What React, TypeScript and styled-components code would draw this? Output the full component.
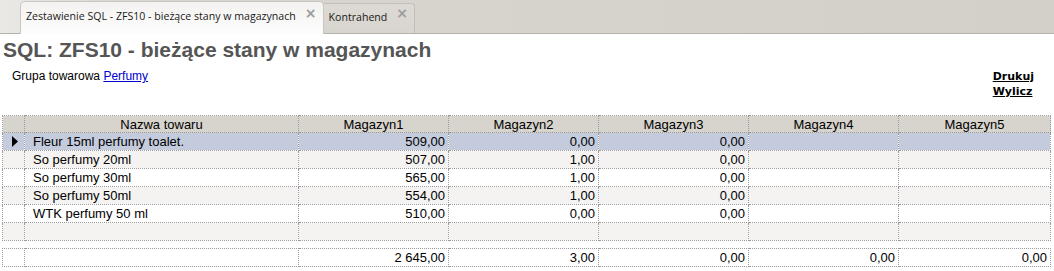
import styled, { createGlobalStyle } from "styled-components";

const GlobalStyle = createGlobalStyle`
  body {
    margin: 0;
    background: #ffffff;
    font-family: "Liberation Sans", Arial, sans-serif;
  }
`;

interface IRow {
  name: string;
  values: string[];
}

const rows: IRow[] = [
  { name: "Fleur 15ml perfumy toalet.", values: ["509,00", "0,00", "0,00", "", ""] },
  { name: "So perfumy 20ml", values: ["507,00", "1,00", "0,00", "", ""] },
  { name: "So perfumy 30ml", values: ["565,00", "1,00", "0,00", "", ""] },
  { name: "So perfumy 50ml", values: ["554,00", "1,00", "0,00", "", ""] },
  { name: "WTK perfumy 50 ml", values: ["510,00", "0,00", "0,00", "", ""] },
  { name: "", values: ["", "", "", "", ""] },
];

const totals = ["2 645,00", "3,00", "0,00", "0,00", "0,00"];
const columns = ["Magazyn1", "Magazyn2", "Magazyn3", "Magazyn4", "Magazyn5"];

const Page = styled.div`
  width: 1054px;
  height: 271px;
  overflow: hidden;
`;

const TabBar = styled.div`
  height: 34px;
  box-sizing: border-box;
  display: flex;
  align-items: flex-end;
  padding-left: 20px;
  background: linear-gradient(to right, #ebe9e6 0px, #d9d6d0 120px, #d3d0ca 100%);
  border-bottom: 1px solid #b4b2aa;
`;

const Tab = styled.div<{ active?: boolean }>`
  display: flex;
  align-items: center;
  gap: 9px;
  box-sizing: border-box;
  height: ${(props): string => (props.active ? "33px" : "30px")};
  margin-bottom: ${(props): string => (props.active ? "-1px" : "0")};
  padding: 0 6px 4px 5px;
  font-family: "Open Sans", "DejaVu Sans", sans-serif;
  font-size: 10.6px;
  color: #1a1a1a;
  background: ${(props): string =>
    props.active ? "linear-gradient(#f3f2f0, #fdfdfd)" : "linear-gradient(#dddad5, #d8d5cf)"};
  border: 1px solid ${(props): string => (props.active ? "#c9c7c2" : "#c2bfb9")};
  border-bottom: none;
  border-radius: ${(props): string => (props.active ? "5px 5px 0 0" : "0 4px 0 0")};
  border-left: ${(props): string => (props.active ? "1px solid #c9c7c2" : "none")};
`;

const Close = styled.span`
  color: #9c9c9c;
  font-family: "DejaVu Sans", sans-serif;
  font-weight: bold;
  font-size: 14px;
  margin-top: -7px;
`;

const Title = styled.h1`
  margin: 0;
  padding: 4px 0 0 3px;
  height: 26px;
  font-size: 21px;
  font-weight: bold;
  color: #555555;
  line-height: 24px;
`;

const Toolbar = styled.div`
  display: flex;
  justify-content: space-between;
  align-items: flex-start;
  padding: 5px 20px 0 12px;
  height: 51px;
  box-sizing: border-box;
  font-size: 12px;
`;

const Group = styled.div`
  color: #000000;
  a {
    color: #0000cc;
    text-decoration: underline;
  }
`;

const Actions = styled.div`
  display: flex;
  flex-direction: column;
  gap: 2px;
  font-family: "DejaVu Sans", sans-serif;
  font-size: 11px;
  font-weight: bold;
  padding-top: 1px;
  a {
    color: #000000;
    text-decoration: underline;
  }
`;

const Grid = styled.table`
  margin-left: 2px;
  width: 1048px;
  border-collapse: collapse;
  table-layout: fixed;
  font-size: 13px;
  color: #000000;
`;

const HeadCell = styled.th`
  height: 16px;
  padding: 0;
  font-weight: normal;
  text-align: center;
  background: #d7d4ce;
  border: 1px dotted #9a9a9a;
  line-height: 15px;
`;

const BodyRow = styled.tr<{ variant: "selected" | "odd" | "even" }>`
  background: ${(props): string =>
    props.variant === "selected" ? "#c4cbdc" : props.variant === "odd" ? "#f4f3f1" : "#ffffff"};
`;

const Cell = styled.td<{ align?: "left" | "right" }>`
  height: 17px;
  padding: 0 3px 0 8px;
  line-height: 15px;
  text-align: ${(props): string => props.align ?? "left"};
  border: 1px dotted #9a9a9a;
  white-space: nowrap;
  overflow: hidden;
`;

const Spacer = styled.div`
  height: 7px;
`;

const Marker = (): JSX.Element => (
  <svg width="8" height="11" viewBox="0 0 8 11" style={{ display: "block" }}>
    <path d="M1 0 L7 5.5 L1 11 Z" fill="#000" />
  </svg>
);

const Cols = (): JSX.Element => (
  <colgroup>
    <col style={{ width: 22 }} />
    <col style={{ width: 274 }} />
    <col style={{ width: 150 }} />
    <col style={{ width: 150 }} />
    <col style={{ width: 150 }} />
    <col style={{ width: 150 }} />
    <col style={{ width: 152 }} />
  </colgroup>
);

const App = (): JSX.Element => {
  return (
    <Page>
      <GlobalStyle />
      <TabBar>
        <Tab active>
          <span>Zestawienie SQL - ZFS10 - bieżące stany w magazynach</span>
          <Close>×</Close>
        </Tab>
        <Tab>
          <span>Kontrahend</span>
          <Close>×</Close>
        </Tab>
      </TabBar>
      <Title>SQL: ZFS10 - bieżące stany w magazynach</Title>
      <Toolbar>
        <Group>
          Grupa towarowa <a href="#">Perfumy</a>
        </Group>
        <Actions>
          <a href="#">Drukuj</a>
          <a href="#">Wylicz</a>
        </Actions>
      </Toolbar>
      <Grid>
        <Cols />
        <thead>
          <tr>
            <HeadCell />
            <HeadCell>Nazwa towaru</HeadCell>
            {columns.map((col) => (
              <HeadCell key={col}>{col}</HeadCell>
            ))}
          </tr>
        </thead>
        <tbody>
          {rows.map((row, i) => (
            <BodyRow key={i} variant={i === 0 ? "selected" : i % 2 === 1 ? "odd" : "even"}>
              <Cell>{i === 0 && <Marker />}</Cell>
              <Cell>{row.name}</Cell>
              {row.values.map((v, j) => (
                <Cell key={j} align="right">
                  {v}
                </Cell>
              ))}
            </BodyRow>
          ))}
        </tbody>
      </Grid>
      <Spacer />
      <Grid>
        <Cols />
        <tbody>
          <BodyRow variant="even">
            <Cell />
            <Cell />
            {totals.map((v, j) => (
              <Cell key={j} align="right">
                {v}
              </Cell>
            ))}
          </BodyRow>
        </tbody>
      </Grid>
    </Page>
  );
};

export default App;
